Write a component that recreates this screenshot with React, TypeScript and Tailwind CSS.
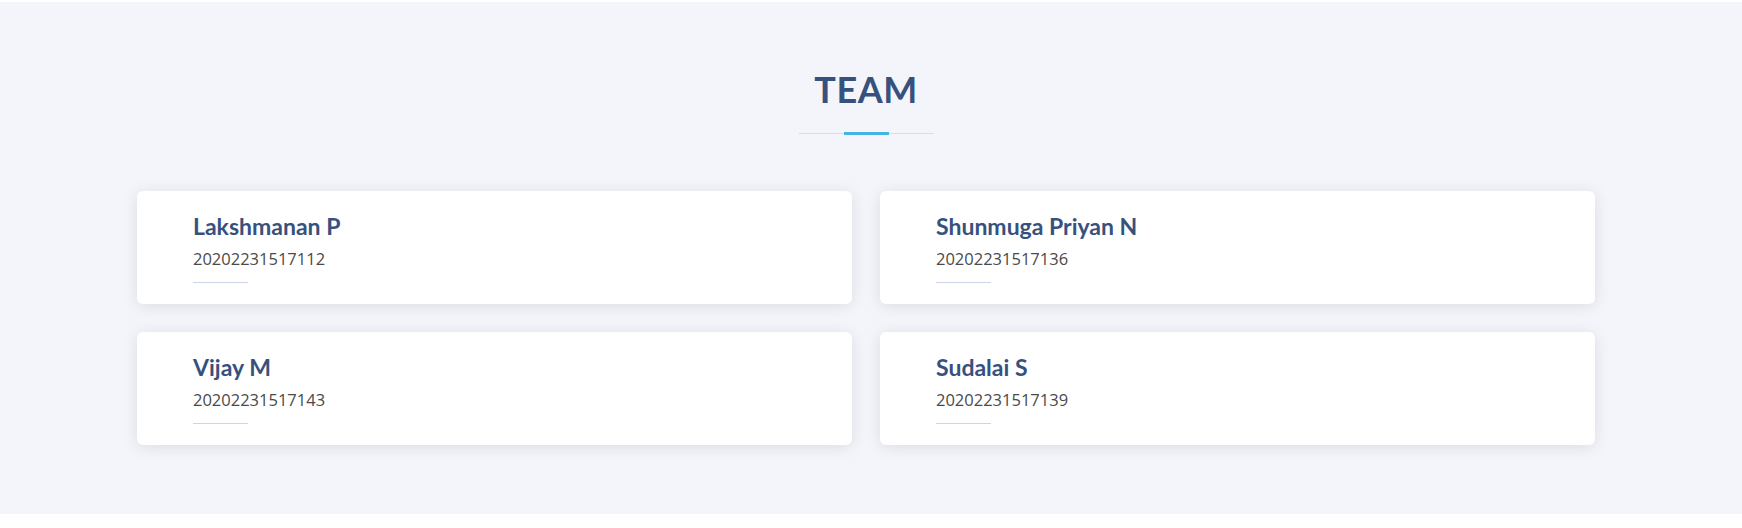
const members = [
  { name: "Lakshmanan P", id: "20202231517112" },
  { name: "Shunmuga Priyan N", id: "20202231517136" },
  { name: "Vijay M", id: "20202231517143" },
  { name: "Sudalai S", id: "20202231517139" },
];

function MemberCard({ name, id }: { name: string; id: string }) {
  return (
    <div className="rounded-[6px] bg-white pt-[22px] pb-[21px] pl-[56px] shadow-[0_2px_16px_rgba(0,0,0,0.1)]">
      <h4 className="font-['Lato',sans-serif] text-[23px] leading-[27px] font-bold text-[#37517e]">
        {name}
      </h4>
      <span className="relative mt-[6px] block pb-[12px] font-['Open_Sans',sans-serif] text-[16.5px] leading-[25px] text-[#4a4a4a] after:absolute after:bottom-0 after:left-0 after:h-px after:w-[55px] after:bg-[#cbd6e9] after:content-['']">
        {id}
      </span>
    </div>
  );
}

export default function App() {
  return (
    <div className="min-h-[528px] bg-white pt-[2px]">
      <section className="bg-[#f3f5fa] pt-[66px] pb-[69px]">
        <div className="ml-[137px] w-[1458px]">
          <div className="mb-[56px] flex flex-col items-center">
            <h2 className="font-['Lato',sans-serif] text-[36px] leading-[42px] font-bold tracking-[0.5px] text-[#37517e] uppercase">
              Team
            </h2>
            <div className="relative mt-[22px] h-[3px] w-[135px]">
              <div className="absolute bottom-[1px] left-0 h-px w-full bg-[#dddddd]" />
              <div className="absolute bottom-0 left-[45px] h-[3px] w-[45px] bg-[#47b2e4]" />
            </div>
          </div>
          <div className="grid grid-cols-2 gap-[28px]">
            {members.map((m) => (
              <MemberCard key={m.id} name={m.name} id={m.id} />
            ))}
          </div>
        </div>
      </section>
    </div>
  );
}
